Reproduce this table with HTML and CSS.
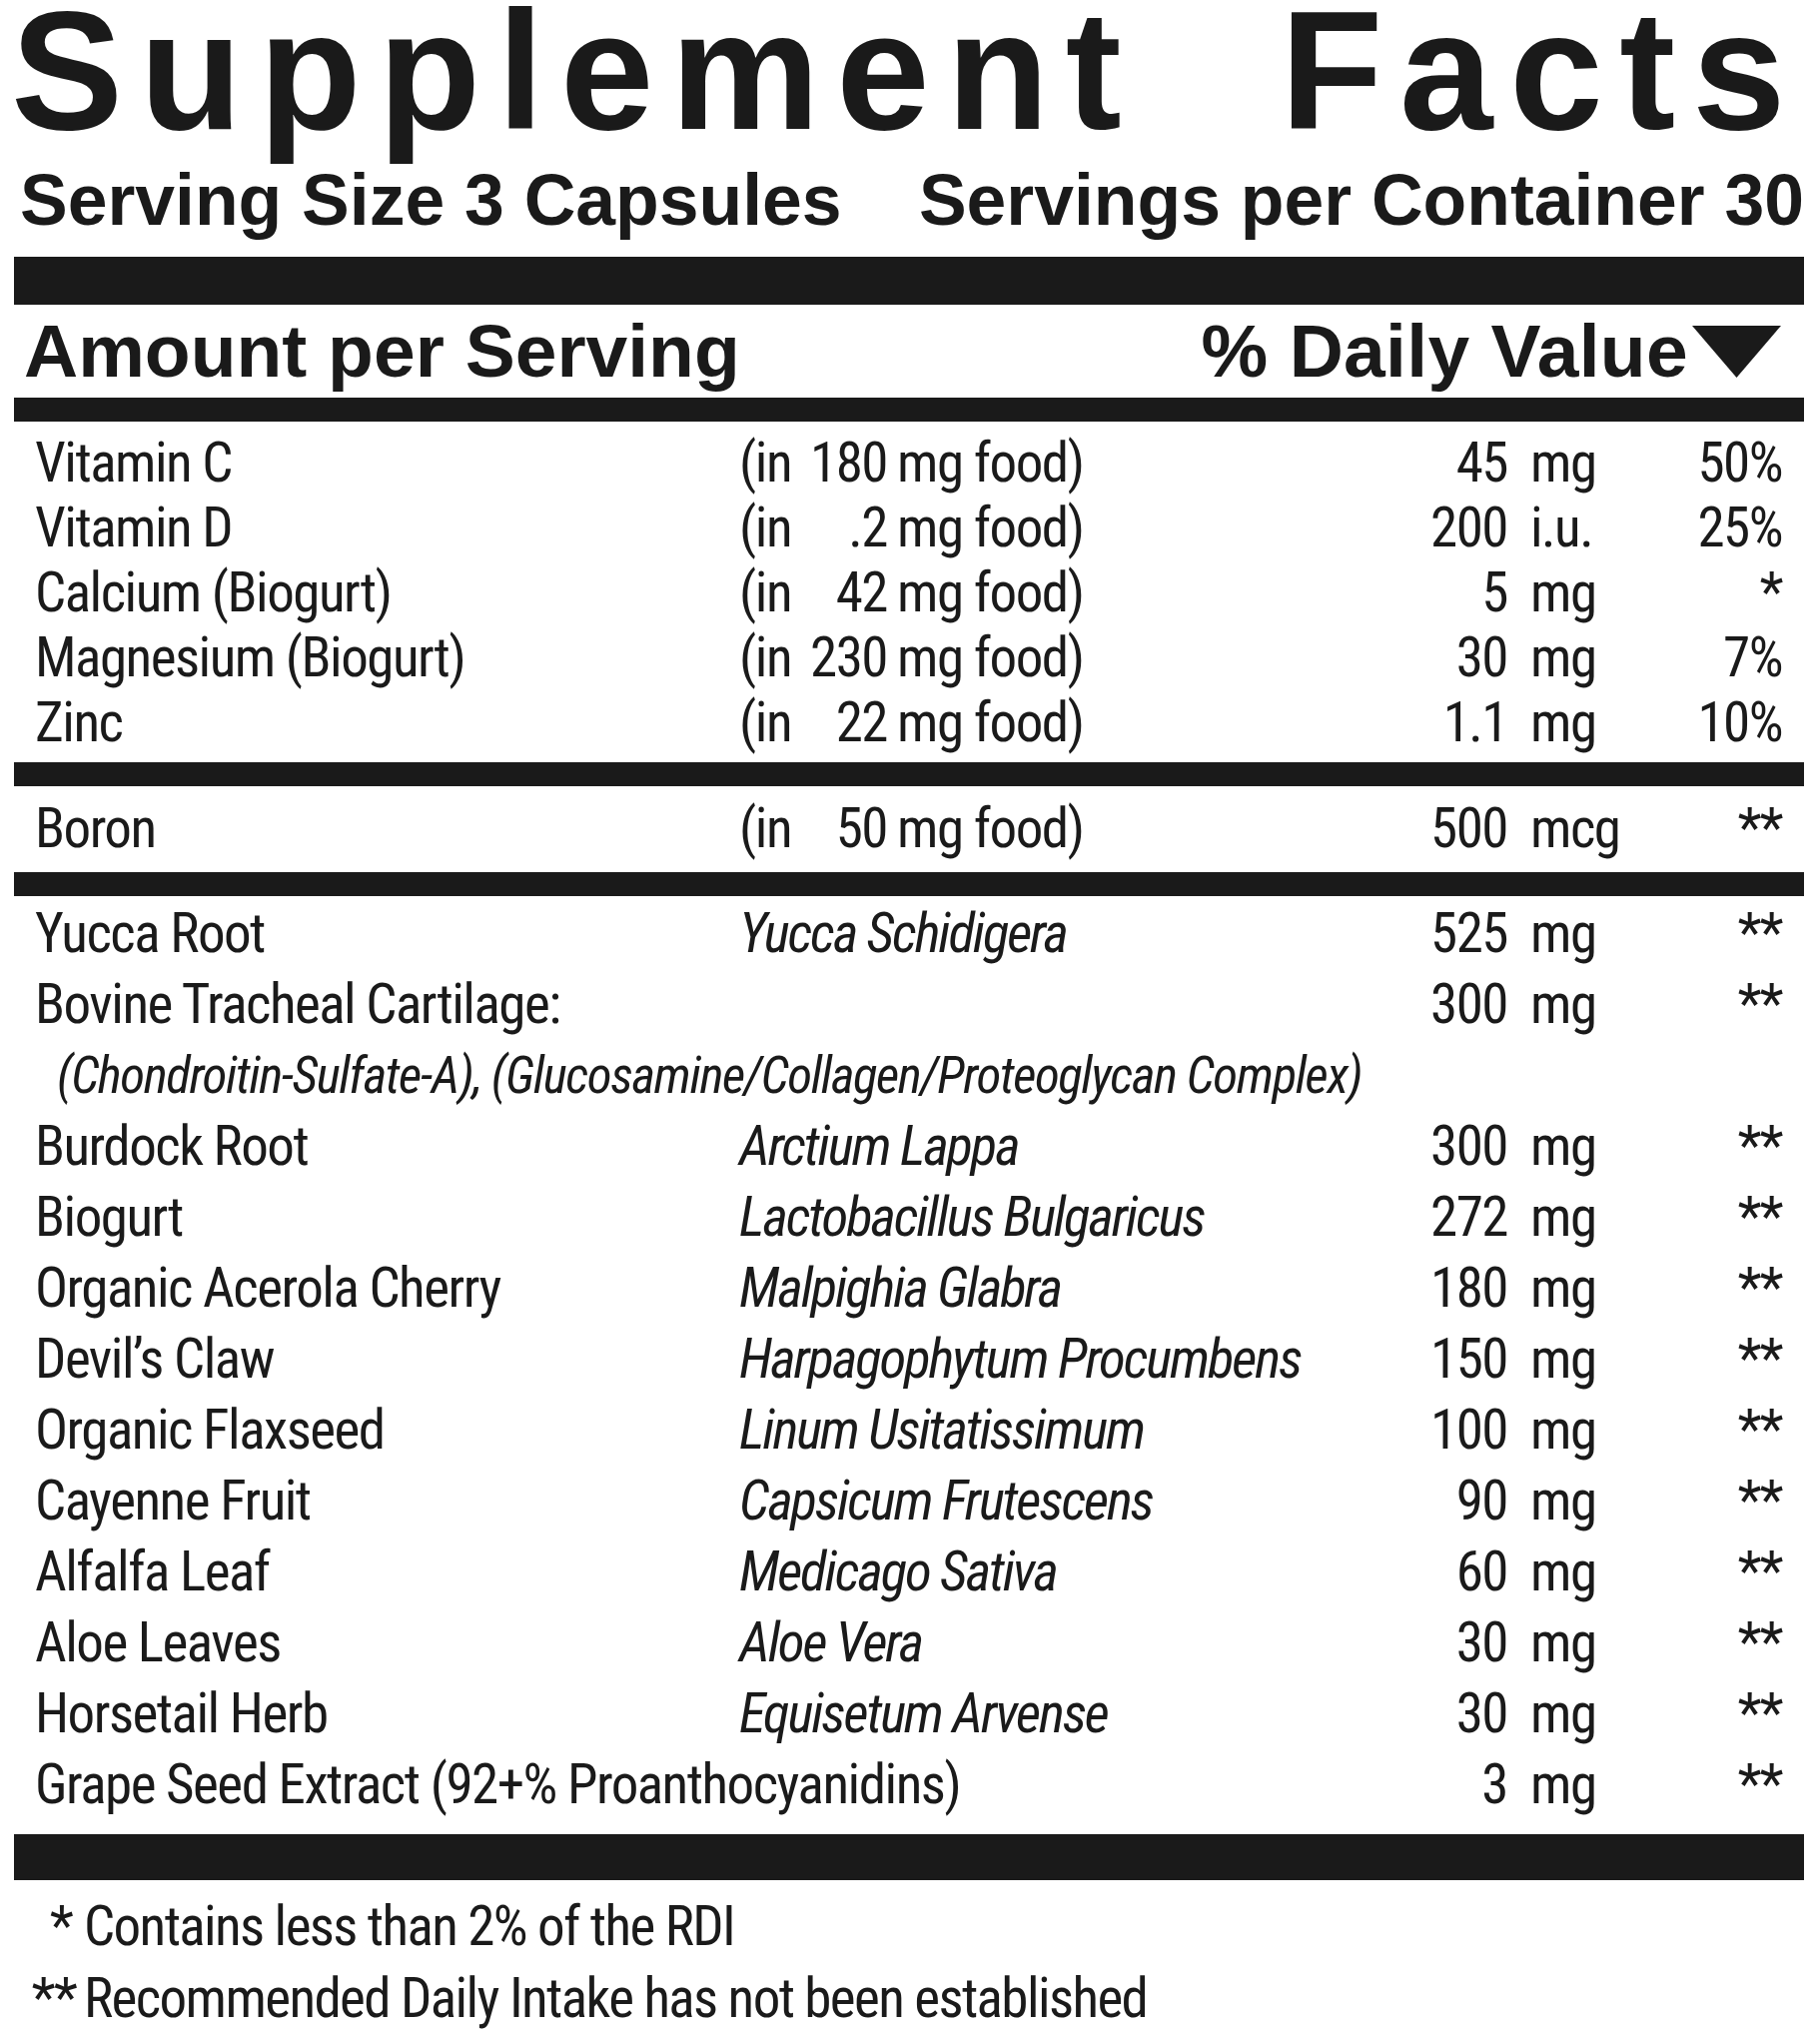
FILE: index.html
```html
<!DOCTYPE html>
<html lang="en">
<head>
<meta charset="utf-8">
<title>Supplement Facts</title>
<link rel="stylesheet" href="styles.css">
</head>
<body>
<div class="label">
  <h1 class="title">Supplement Facts</h1>
  <div class="serving"><span>Serving Size 3 Capsules</span><span>Servings per Container 30</span></div>
  <div class="bar bar-top"></div>
  <div class="head">
    <span>Amount per Serving</span>
    <span class="dv-head">% Daily Value<svg class="tri" viewBox="0 0 89 52" width="89" height="52"><polygon points="0,0 89,0 44.5,52" fill="#1a1a1a"/></svg></span>
  </div>
  <div class="bar"></div>
  <div class="section s1">
    <div class="row"><span class="name">Vitamin C</span><span class="in">(in</span><span class="famt">180</span><span class="frest">mg food)</span><span class="amt">45</span><span></span><span class="unit">mg</span><span class="dv">50%</span></div>
    <div class="row"><span class="name">Vitamin D</span><span class="in">(in</span><span class="famt">.2</span><span class="frest">mg food)</span><span class="amt">200</span><span></span><span class="unit">i.u.</span><span class="dv">25%</span></div>
    <div class="row"><span class="name">Calcium (Biogurt)</span><span class="in">(in</span><span class="famt">42</span><span class="frest">mg food)</span><span class="amt">5</span><span></span><span class="unit">mg</span><span class="dv">*</span></div>
    <div class="row"><span class="name">Magnesium (Biogurt)</span><span class="in">(in</span><span class="famt">230</span><span class="frest">mg food)</span><span class="amt">30</span><span></span><span class="unit">mg</span><span class="dv">7%</span></div>
    <div class="row"><span class="name">Zinc</span><span class="in">(in</span><span class="famt">22</span><span class="frest">mg food)</span><span class="amt">1.1</span><span></span><span class="unit">mg</span><span class="dv">10%</span></div>
  </div>
  <div class="bar"></div>
  <div class="section s2">
    <div class="row"><span class="name">Boron</span><span class="in">(in</span><span class="famt">50</span><span class="frest">mg food)</span><span class="amt">500</span><span></span><span class="unit">mcg</span><span class="dv">**</span></div>
  </div>
  <div class="bar"></div>
  <div class="section s3">
    <div class="row"><span class="name">Yucca Root</span><span class="latin">Yucca Schidigera</span><span class="amt">525</span><span></span><span class="unit">mg</span><span class="dv">**</span></div>
    <div class="row"><span class="name">Bovine Tracheal Cartilage:</span><span class="latin"></span><span class="amt">300</span><span></span><span class="unit">mg</span><span class="dv">**</span></div>
    <div class="row"><span class="sub">(Chondroitin-Sulfate-A), (Glucosamine/Collagen/Proteoglycan Complex)</span></div>
    <div class="row"><span class="name">Burdock Root</span><span class="latin">Arctium Lappa</span><span class="amt">300</span><span></span><span class="unit">mg</span><span class="dv">**</span></div>
    <div class="row"><span class="name">Biogurt</span><span class="latin">Lactobacillus Bulgaricus</span><span class="amt">272</span><span></span><span class="unit">mg</span><span class="dv">**</span></div>
    <div class="row"><span class="name">Organic Acerola Cherry</span><span class="latin">Malpighia Glabra</span><span class="amt">180</span><span></span><span class="unit">mg</span><span class="dv">**</span></div>
    <div class="row"><span class="name">Devil’s Claw</span><span class="latin">Harpagophytum Procumbens</span><span class="amt">150</span><span></span><span class="unit">mg</span><span class="dv">**</span></div>
    <div class="row"><span class="name">Organic Flaxseed</span><span class="latin">Linum Usitatissimum</span><span class="amt">100</span><span></span><span class="unit">mg</span><span class="dv">**</span></div>
    <div class="row"><span class="name">Cayenne Fruit</span><span class="latin">Capsicum Frutescens</span><span class="amt">90</span><span></span><span class="unit">mg</span><span class="dv">**</span></div>
    <div class="row"><span class="name">Alfalfa Leaf</span><span class="latin">Medicago Sativa</span><span class="amt">60</span><span></span><span class="unit">mg</span><span class="dv">**</span></div>
    <div class="row"><span class="name">Aloe Leaves</span><span class="latin">Aloe Vera</span><span class="amt">30</span><span></span><span class="unit">mg</span><span class="dv">**</span></div>
    <div class="row"><span class="name">Horsetail Herb</span><span class="latin">Equisetum Arvense</span><span class="amt">30</span><span></span><span class="unit">mg</span><span class="dv">**</span></div>
    <div class="row"><span class="name wide">Grape Seed Extract (92+% Proanthocyanidins)</span><span class="amt">3</span><span></span><span class="unit">mg</span><span class="dv">**</span></div>
  </div>
  <div class="bar bar-bottom"></div>
  <div class="notes">
    <div class="note"><span class="mark mark-single">*</span><span>Contains less than 2% of the RDI</span></div>
    <div class="note"><span class="mark">**</span><span>Recommended Daily Intake has not been established</span></div>
  </div>
</div>
</body>
</html>
```

FILE: styles.css
```css
html, body {
  margin: 0;
  padding: 0;
  background: #ffffff;
}

body {
  color: #1a1a1a;
  font-family: "Roboto", "Liberation Sans", sans-serif;
}

.label {
  width: 1792px;
  margin-left: 14px;
}

.title {
  margin: 0 0 0 -3px;
  font-family: "Liberation Sans", Arial, sans-serif;
  font-weight: bold;
  font-size: 168px;
  line-height: 143px;
  letter-spacing: 16.7px;
  word-spacing: 79px;
  white-space: nowrap;
}

.serving {
  display: flex;
  justify-content: space-between;
  padding: 0 0 0 6px;
  font-family: "Liberation Sans", Arial, sans-serif;
  font-weight: bold;
  font-size: 71.5px;
  line-height: 114px;
  white-space: nowrap;
}

.bar {
  height: 24px;
  background: #1a1a1a;
}

.bar-top {
  height: 48px;
}

.bar-bottom {
  height: 46px;
}

.head {
  display: flex;
  justify-content: space-between;
  align-items: baseline;
  height: 93px;
  padding: 0 23px 0 10px;
  font-family: "Liberation Sans", Arial, sans-serif;
  font-weight: bold;
  font-size: 75px;
  line-height: 93px;
  white-space: nowrap;
}

.dv-head {
  display: flex;
  align-items: baseline;
  letter-spacing: 0.3px;
}

.tri {
  display: block;
  margin-left: 4px;
  align-self: center;
}

.section {
  padding-left: 21px;
  font-size: 55px;
  font-stretch: 75%;
  letter-spacing: -1.5px;
  line-height: 65px;
}

.s1 {
  padding-top: 9px;
  padding-bottom: 7px;
}

.s2 {
  padding-top: 10px;
  padding-bottom: 11px;
}

.s3 {
  padding-top: 2px;
  padding-bottom: 14px;
  line-height: 71px;
}

.row {
  display: grid;
  grid-template-columns: 705px 46px 102px 514px 107px 23px 120px 132px;
  white-space: nowrap;
}

.in {
  grid-column: 2;
}

.famt {
  text-align: right;
}

.frest {
  padding-left: 10px;
}

.amt {
  grid-column: 5;
  text-align: right;
}

.unit {
  grid-column: 7;
}

.dv {
  grid-column: 8;
  text-align: right;
}

.latin {
  grid-column: 2 / 5;
  font-style: italic;
  letter-spacing: -2.1px;
}

.wide {
  grid-column: 1 / 5;
}

.sub {
  grid-column: 1 / -1;
  padding-left: 22px;
  font-style: italic;
  font-size: 51px;
  letter-spacing: -1.4px;
}

.notes {
  font-size: 55px;
  font-stretch: 75%;
  letter-spacing: -1.6px;
  line-height: 72px;
  padding-top: 10px;
}

.note {
  display: grid;
  grid-template-columns: 62px 1fr;
  column-gap: 8px;
  white-space: nowrap;
}

.mark {
  text-align: right;
}

.mark-single {
  padding-right: 4px;
}
```
